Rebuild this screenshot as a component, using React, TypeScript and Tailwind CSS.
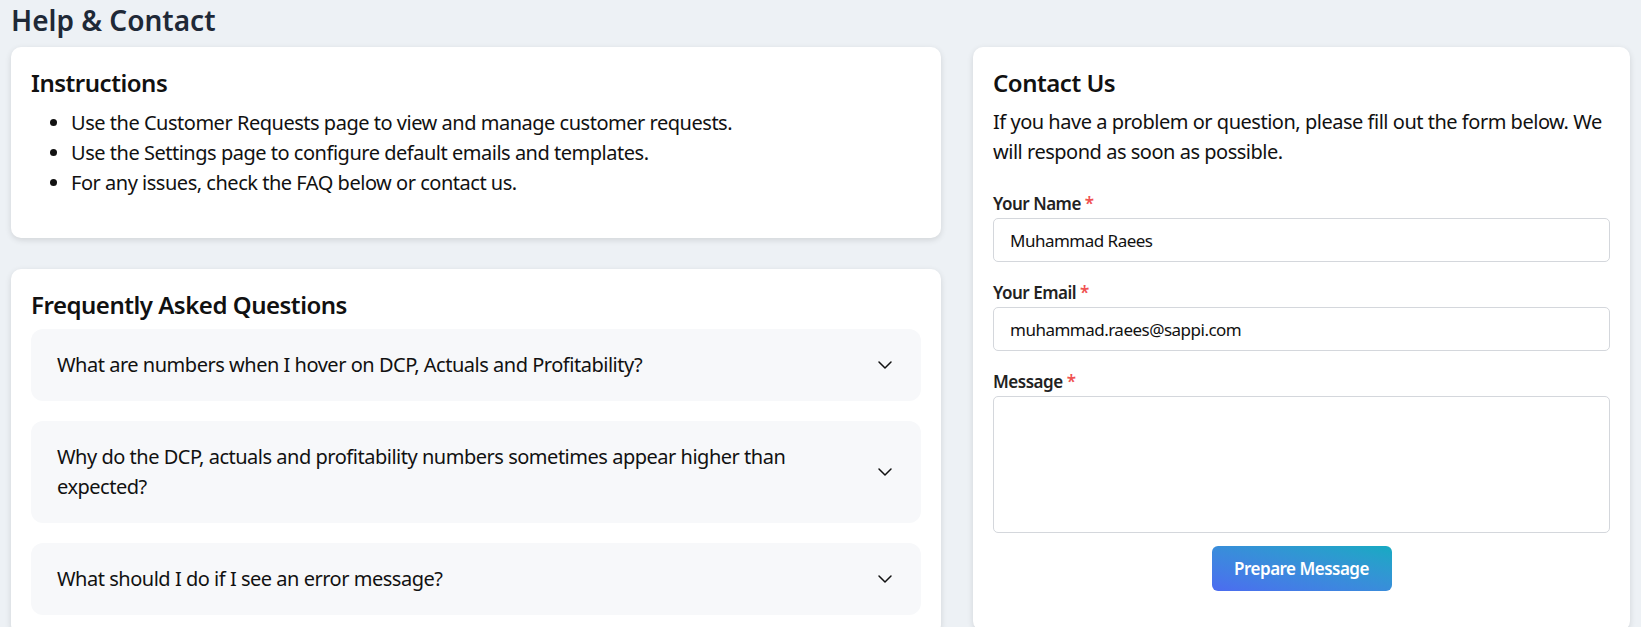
import React from 'react';
import { ChevronDown } from 'lucide-react';

const faqs = [
  'What are numbers when I hover on DCP, Actuals and Profitability?',
  'Why do the DCP, actuals and profitability numbers sometimes appear higher than expected?',
  'What should I do if I see an error message?',
];

const Label = ({ children }: { children: React.ReactNode }) => (
  <label className="block text-[17px] font-semibold text-[#222] leading-[26px] mb-[1px]">
    {children} <span className="text-[#f05252]">*</span>
  </label>
);

const App = () => {
  return (
    <div
      className="min-h-screen bg-[#edf1f5] px-[11px] tracking-[-0.03em]"
      style={{ fontFamily: '"Segoe UI", "Noto Sans", "Open Sans", sans-serif' }}
    >
      <h1 className="text-[28px] font-semibold text-[#1f2937] leading-[40px] tracking-normal">Help &amp; Contact</h1>
      <div className="grid grid-cols-[930fr_657fr] gap-8 mt-[7px] items-start">
        <div className="flex flex-col gap-[31px]">
          <div className="bg-white rounded-[10px] shadow-[0_2px_6px_rgba(0,0,0,0.12)] p-5 pb-[24px]">
            <h2 className="text-[24px] font-semibold text-[#111] leading-[32px] mb-[9px]">Instructions</h2>
            <ul className="list-disc pl-10 text-[20px] leading-[30px] text-[#111] mb-4">
              <li>Use the Customer Requests page to view and manage customer requests.</li>
              <li>Use the Settings page to configure default emails and templates.</li>
              <li>For any issues, check the FAQ below or contact us.</li>
            </ul>
          </div>

          <div className="bg-white rounded-[10px] shadow-[0_2px_6px_rgba(0,0,0,0.12)] p-5">
            <h2 className="text-[24px] font-semibold text-[#111] leading-[32px] mb-[8px]">Frequently Asked Questions</h2>
            <div className="flex flex-col gap-5">
              {faqs.map((q) => (
                <div
                  key={q}
                  className="flex items-center justify-between bg-[#f7f8fa] rounded-xl pl-[26px] pr-6 py-[21px]"
                >
                  <span className="text-[20px] leading-[30px] text-[#111] pr-12">{q}</span>
                  <ChevronDown size={24} strokeWidth={1.5} className="text-[#111] shrink-0" />
                </div>
              ))}
            </div>
          </div>
        </div>

        <div className="bg-white rounded-[10px] shadow-[0_2px_6px_rgba(0,0,0,0.12)] p-5 pb-10">
          <h2 className="text-[24px] font-semibold text-[#111] leading-[32px] mb-[8px]">Contact Us</h2>
          <p className="text-[20px] leading-[30px] text-[#111] mb-6">
            If you have a problem or question, please fill out the form below. We will respond as soon as possible.
          </p>
          <div className="mb-[18px]">
            <Label>Your Name</Label>
            <input
              readOnly
              value="Muhammad Raees"
              className="w-full h-[44px] border border-[#d4d7dc] rounded-[5px] px-4 text-[17px] tracking-[-0.03em] text-[#111] outline-none"
            />
          </div>
          <div className="mb-[18px]">
            <Label>Your Email</Label>
            <input
              readOnly
              value="muhammad.raees@sappi.com"
              className="w-full h-[44px] border border-[#d4d7dc] rounded-[5px] px-4 text-[17px] tracking-[-0.03em] text-[#111] outline-none"
            />
          </div>
          <div>
            <Label>Message</Label>
            <textarea
              readOnly
              className="block w-full h-[137px] border border-[#d4d7dc] rounded-[5px] px-4 py-2 text-[17px] resize-none outline-none"
            />
          </div>
          <div className="flex justify-center mt-[13px]">
            <button className="w-[180px] h-[45px] rounded-[6px] bg-gradient-to-tr from-[#4c6bf0] to-[#15aac2] text-white text-[17px] font-semibold tracking-[-0.03em]">
              Prepare Message
            </button>
          </div>
        </div>
      </div>
    </div>
  );
};

export default App;
